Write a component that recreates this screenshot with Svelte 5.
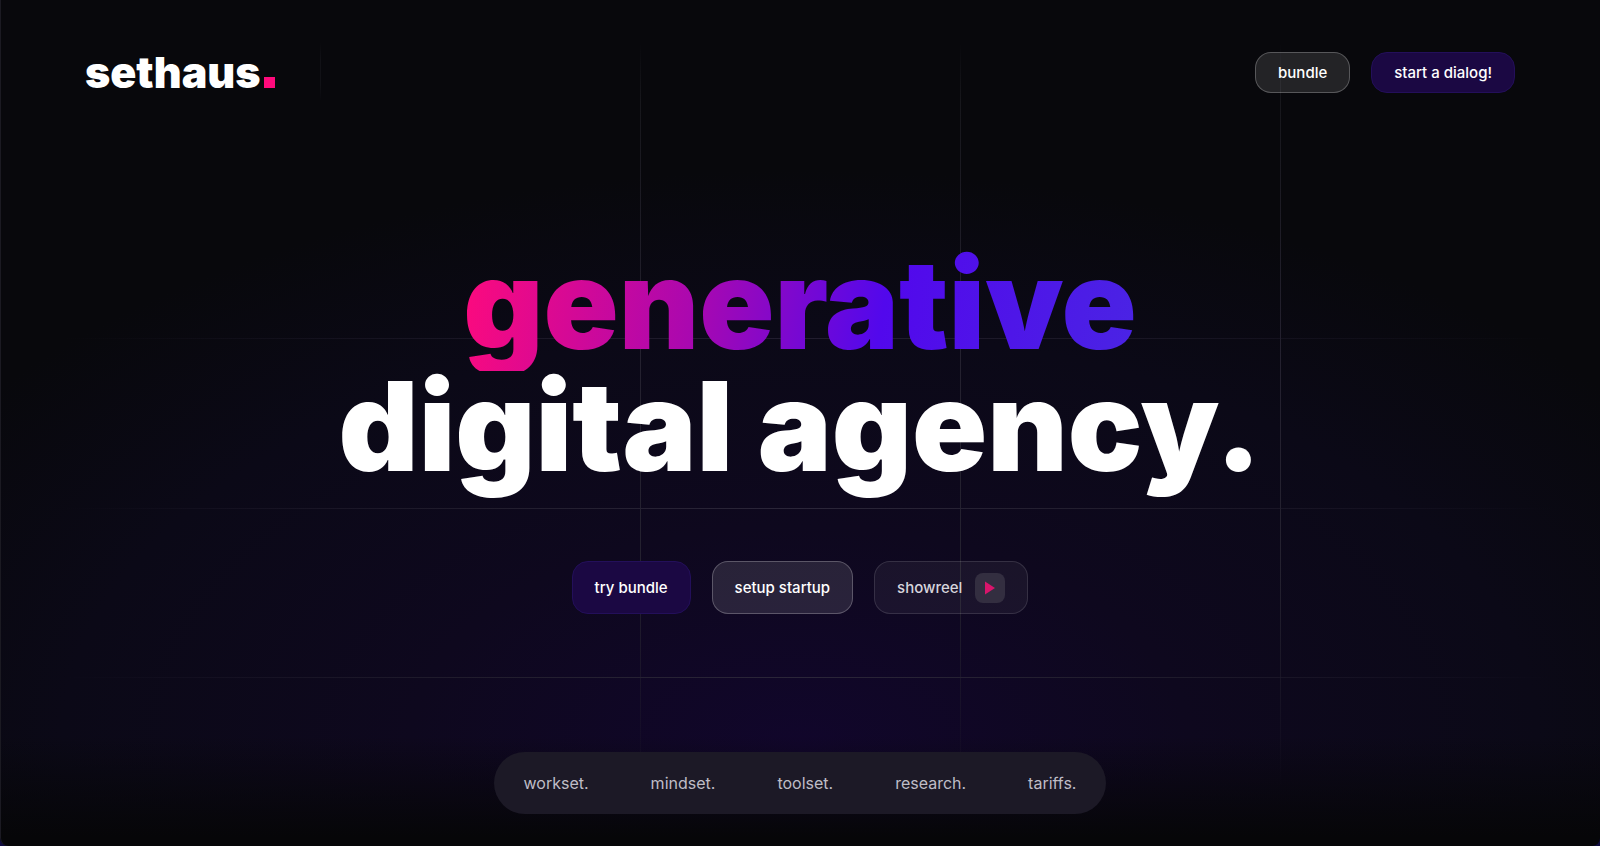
<script>
  const sections = ['workset.', 'mindset.', 'toolset.', 'research.', 'tariffs.'];
  const lines = [1, 2, 3, 4];
</script>

<div class="page">
  <div class="grid columns" aria-hidden="true">
    {#each lines as line}
      <span class="column-{line}"></span>
    {/each}
  </div>
  <div class="grid rows" aria-hidden="true">
    {#each lines as line}
      <span class="row-{line}"></span>
    {/each}
  </div>

  <header>
    <a class="logo" href="#home">sethaus<span class="dot"></span></a>
    <div class="actions">
      <a class="btn glass" href="#bundle">bundle</a>
      <a class="btn accent" href="#dialog">start a dialog!</a>
    </div>
  </header>

  <main>
    <h1>
      <span class="gradient">generative</span>
      <span class="plain">digital agency.</span>
    </h1>
    <div class="cta">
      <a class="btn large accent" href="#bundle">try bundle</a>
      <a class="btn large glass" href="#startup">setup startup</a>
      <button class="btn large ghost" type="button">
        showreel
        <span class="play">
          <svg width="10" height="14" viewBox="0 0 10 14" aria-hidden="true">
            <path d="M0 0.5 10 7 0 13.5Z" fill="#d8156b" />
          </svg>
        </span>
      </button>
    </div>
  </main>

  <footer>
    <nav aria-label="Sections">
      {#each sections as name}
        <a href="#{name.slice(0, -1)}">{name}</a>
      {/each}
    </nav>
  </footer>
</div>

<style>
  :global(body) { background: #100c40; }
  .page {
    position: relative;
    box-sizing: border-box;
    min-height: 100vh;
    display: flex;
    flex-direction: column;
    padding: 52px 85px 32px;
    border-radius: 0 0 8px 8px;
    box-shadow: inset 1px 0 #1b1a22;
    overflow: hidden;
    background:
      linear-gradient(to bottom, transparent 87%, #060608 99%),
      radial-gradient(ellipse 64% 68% at 50% 88%, #11062b 0%, #0e081e 38%, #0b0917 72%, #08080c 100%);
    font-family: Inter, sans-serif;
    color: #fff;
  }

  .grid {
    position: absolute;
    inset: 0;
    display: grid;
    pointer-events: none;
  }
  .columns { grid-template-columns: repeat(5, 1fr); }
  .rows { grid-template-rows: repeat(5, 1fr); }
  .columns span {
    width: 1px;
    justify-self: end;
    margin-right: -1px;
    background: linear-gradient(to bottom, transparent 5%, #17171c 12%, #24212f 42%, #24212f 68%, transparent 93%);
  }
  .columns .column-1 { background: linear-gradient(to bottom, transparent 5%, #111116 7%, #111116 10%, transparent 12%); }
  .rows span {
    height: 1px;
    align-self: end;
    margin-bottom: -1px;
    background: linear-gradient(to right, transparent 4%, #211d2d 30%, #2b2639 50%, #211d2d 70%, transparent 97%);
  }
  .rows .row-1 { background: none; }
  .rows .row-2 { opacity: .7; }

  header, main, footer { position: relative; }
  header {
    display: flex;
    align-items: center;
    justify-content: space-between;
  }
  a { color: inherit; text-decoration: none; }
  .logo {
    display: flex;
    align-items: baseline;
    gap: 3px;
    font-size: 43px;
    line-height: 41px;
    font-weight: 900;
  }
  .dot {
    width: 11px;
    height: 11px;
    background: #ff0a7c;
  }

  .actions, .cta {
    display: flex;
    gap: 21px;
  }
  .btn {
    box-sizing: border-box;
    display: flex;
    align-items: center;
    height: 41px;
    padding: 0 22px;
    border: 1px solid;
    border-radius: 16px;
    font: 500 15px/20px Inter, sans-serif;
    white-space: nowrap;
  }
  .large { height: 53px; }
  .accent {
    background: #1b0843;
    border-color: #230f5a;
  }
  .glass {
    background: rgba(255, 255, 255, .11);
    border-color: rgba(255, 255, 255, .24);
  }
  .ghost {
    gap: 13px;
    background: rgba(255, 255, 255, .05);
    border-color: rgba(255, 255, 255, .12);
    color: #d6d4dc;
    cursor: pointer;
  }
  .play {
    display: grid;
    place-items: center;
    width: 30px;
    height: 30px;
    border-radius: 8px;
    background: #332e40;
  }

  main {
    flex: 1;
    display: flex;
    flex-direction: column;
    align-items: center;
    justify-content: center;
    padding-top: 12px;
  }
  h1 {
    margin: 0 0 74px;
    font-size: 124px;
    line-height: 122px;
    font-weight: 900;
    text-align: center;
  }
  h1 span {
    display: block;
    width: fit-content;
    margin: 0 auto;
  }
  /* the extra room below keeps the descender inside the clipped background */
  h1 .gradient {
    padding-bottom: 6px;
    margin-bottom: -6px;
    background: linear-gradient(100deg, #ff0a7c 0%, #a908b0 35%, #5208ec 62%, #4a24e4 100%);
    background-clip: text;
    -webkit-background-clip: text;
    color: transparent;
  }

  footer {
    display: flex;
    justify-content: center;
  }
  nav {
    display: flex;
    gap: 62px;
    padding: 20px 30px;
    border-radius: 31px;
    background: #1c1926;
    font-size: 16px;
    line-height: 22px;
    color: #bfbdc6;
  }
</style>
